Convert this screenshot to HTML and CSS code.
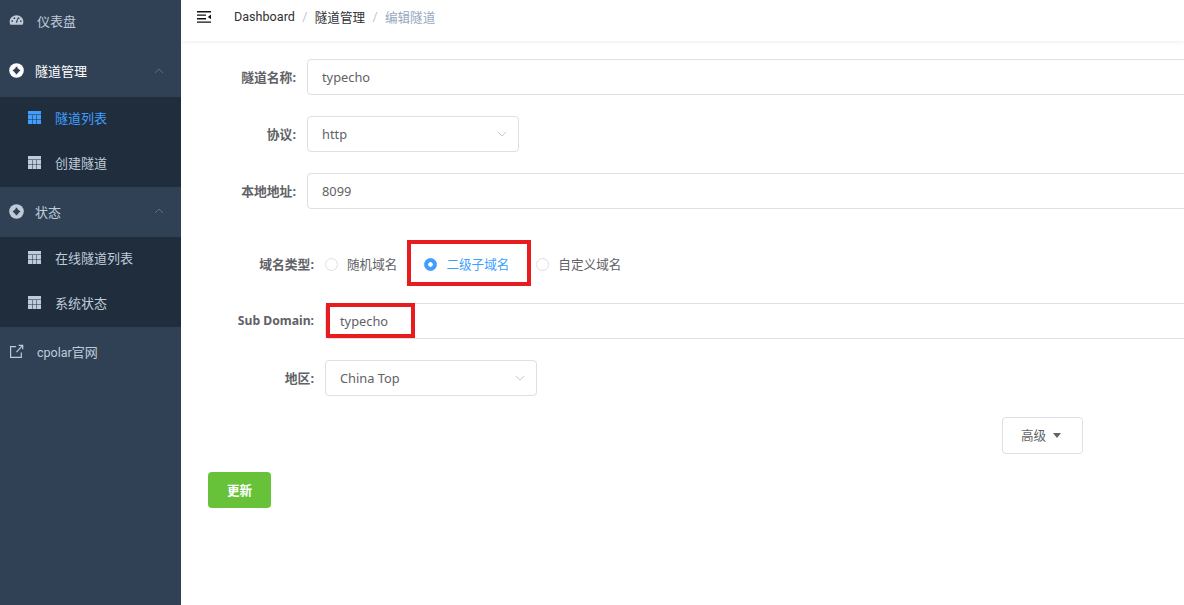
FILE: index.html
```html
<!DOCTYPE html>
<html lang="zh-CN">
<head>
<meta charset="utf-8">
<title>编辑隧道</title>
<link rel="stylesheet" href="styles.css">
</head>
<body>
<aside class="sidebar">
  <a class="menu-item first">
    <svg class="icon" viewBox="0 0 14 14"><path fill="#bfcbd9" d="M7 2C3.200 2 .6 4.900.6 8.200c0 1 .2 2 .7 2.800h11.400c.5-.8.700-1.800.700-2.800C13.400 4.900 10.800 2 7 2z"/><g fill="#304156"><circle cx="3" cy="7.500" r=".8"/><circle cx="5" cy="4.800" r=".8"/><circle cx="9" cy="4.800" r=".8"/><circle cx="11" cy="7.500" r=".8"/><path d="M7.700 4.800l.9.300-1 4h-1.300z"/></g></svg>
    <span>仪表盘</span>
  </a>
  <div class="menu-item open">
    <svg class="icon" viewBox="0 0 14 14"><circle cx="7" cy="7" r="6.800" fill="#fff"/><circle cx="7" cy="7" r="2.400" fill="#304156"/><path fill="#304156" d="M6.200 3.600h1.600v6.800H6.200zM3.600 6.200h6.800v1.600H3.600z"/></svg>
    <span class="title">隧道管理</span>
    <svg class="chevron" viewBox="0 0 10 6"><path d="M1 5l4-4 4 4"/></svg>
  </div>
  <div class="submenu">
    <a class="sub-item active"><svg class="grid" viewBox="0 0 13 13"><path d="M0 0h13v3.400H0zM0 3.900h4v4.100H0zM4.500 3.900h4v4.100h-4zM9 3.900h4v4.100H9zM0 8.500h4V13H0zM4.500 8.500h4V13h-4zM9 8.500h4V13H9z"/></svg><span>隧道列表</span></a>
    <a class="sub-item"><svg class="grid" viewBox="0 0 13 13"><path d="M0 0h13v3.400H0zM0 3.900h4v4.100H0zM4.500 3.900h4v4.100h-4zM9 3.900h4v4.100H9zM0 8.500h4V13H0zM4.500 8.500h4V13h-4zM9 8.500h4V13H9z"/></svg><span>创建隧道</span></a>
  </div>
  <div class="menu-item group">
    <svg class="icon" viewBox="0 0 14 14"><circle cx="7" cy="7" r="6.800" fill="#bfcbd9"/><circle cx="7" cy="7" r="2.400" fill="#304156"/><path fill="#304156" d="M6.200 3.600h1.600v6.800H6.200zM3.600 6.200h6.800v1.600H3.600z"/></svg>
    <span>状态</span>
    <svg class="chevron" viewBox="0 0 10 6"><path d="M1 5l4-4 4 4"/></svg>
  </div>
  <div class="submenu">
    <a class="sub-item"><svg class="grid" viewBox="0 0 13 13"><path d="M0 0h13v3.400H0zM0 3.900h4v4.100H0zM4.500 3.900h4v4.100h-4zM9 3.900h4v4.100H9zM0 8.500h4V13H0zM4.500 8.500h4V13h-4zM9 8.500h4V13H9z"/></svg><span>在线隧道列表</span></a>
    <a class="sub-item"><svg class="grid" viewBox="0 0 13 13"><path d="M0 0h13v3.400H0zM0 3.900h4v4.100H0zM4.500 3.900h4v4.100h-4zM9 3.900h4v4.100H9zM0 8.500h4V13H0zM4.500 8.500h4V13h-4zM9 8.500h4V13H9z"/></svg><span>系统状态</span></a>
  </div>
  <a class="menu-item">
    <svg class="icon" viewBox="0 0 14 14"><path class="line" d="M6.500 2.500H1.500v10h10V8M7 7.500L12.500 1.500M9 1.200h3.800V5"/></svg>
    <span><span class="latin">cpolar</span>官网</span>
  </a>
</aside>

<main class="main">
  <header class="topbar">
    <svg class="hamburger" viewBox="0 0 14 12"><path d="M0 0h14v1.400H0zM0 3.400h9v1.400H0zM0 7h9v1.400H0zM0 10.400h14v1.400H0zM14 3.600v4.600L10.800 5.900z"/></svg>
    <nav class="crumbs">
      <span class="crumb">Dashboard</span><span class="sep">/</span>
      <span class="crumb">隧道管理</span><span class="sep">/</span>
      <span class="crumb current">编辑隧道</span>
    </nav>
  </header>

  <form class="form">
    <div class="row narrow"><label>隧道名称:</label><div class="field full">typecho</div></div>
    <div class="row narrow"><label>协议:</label><div class="field select">http<svg class="caret" viewBox="0 0 12 7"><path d="M1 1l5 5 5-5"/></svg></div></div>
    <div class="row narrow"><label>本地地址:</label><div class="field full">8099</div></div>

    <div class="row wide radios">
      <label>域名类型:</label>
      <span class="radio"><i class="dot"></i>随机域名</span>
      <span class="radio checked"><i class="dot"></i>二级子域名</span>
      <span class="radio"><i class="dot"></i>自定义域名</span>
      <span class="mark mark-radio"></span>
    </div>
    <div class="row wide sub">
      <label>Sub Domain:</label><div class="field full">typecho</div>
      <span class="mark mark-sub"></span>
    </div>
    <div class="row wide"><label>地区:</label><div class="field select">China Top<svg class="caret" viewBox="0 0 12 7"><path d="M1 1l5 5 5-5"/></svg></div></div>

    <div class="advanced"><button type="button" class="btn-adv">高级<i class="tri"></i></button></div>
    <button type="button" class="btn-submit">更新</button>
  </form>
</main>
</body>
</html>
```
FILE: styles.css
```css
* { box-sizing: border-box; }
html, body { height: 100%; }
body {
  margin: 0;
  display: flex;
  overflow: hidden;
  background: #fff;
  font-family: "Noto Sans", "Noto Sans CJK SC", sans-serif;
  font-size: 13px;
  color: #606266;
}

/* sidebar */
.sidebar {
  flex: 0 0 181px;
  height: 605px;
  background: #304156;
  color: #bfcbd9;
  overflow: hidden;
}
.menu-item {
  display: flex;
  align-items: center;
  height: 50px;
  padding-left: 9px;
  padding-bottom: 2px;
}
.menu-item.first { height: 47px; padding-bottom: 6px; }
.menu-item.open { padding-bottom: 3px; }
.menu-item .icon { width: 15px; height: 15px; margin-right: 13px; flex: none; }
.menu-item.open .icon, .menu-item.group .icon { margin-right: 11px; }
.line { fill: none; stroke: #bfcbd9; stroke-width: 1.100; }
.latin { font-family: Roboto, "Noto Sans", sans-serif; font-size: 12.500px; }
.title { color: #fff; }
.chevron { width: 10px; height: 6px; margin-left: auto; margin-right: 17px; fill: none; stroke: #5f6c7c; stroke-width: 1; }
.submenu { background: #1f2d3d; }
.sub-item {
  display: flex;
  align-items: center;
  height: 45px;
  padding-left: 28px;
  padding-bottom: 4px;
}
.grid { width: 13px; height: 13px; margin-right: 14px; fill: #bfcbd9; flex: none; }
.sub-item.active { color: #409eff; }
.sub-item.active .grid { fill: #409eff; }

/* main */
.main { flex: 1; min-width: 0; overflow: hidden; }
.topbar {
  display: flex;
  align-items: center;
  height: 41px;
  padding: 0 0 7px 16px;
  box-shadow: 0 1px 4px rgba(0, 21, 41, .08);
}
.hamburger { width: 14px; height: 12px; fill: #111; margin-right: 23px; }
.crumbs {
  display: flex;
  align-items: center;
  padding-bottom: 1px;
  font-family: Roboto, "Noto Sans CJK SC", sans-serif;
  font-size: 12.600px;
}
.crumb { color: #303133; }
.crumb.current { color: #97a8be; }
.sep { margin: 0 7.300px; color: #c0c4cc; }

.form { padding: 18px 0 0 27px; }
.row { display: flex; align-items: center; height: 36px; margin-bottom: 21px; }
.row label { font-size: 12.800px; font-weight: 700; color: #606266; text-align: right; flex: none; padding-bottom: 2px; }
.narrow label { width: 88px; margin-right: 11px; }
.wide label { width: 106px; margin-right: 11px; }
.row.sub label { font-size: 12.200px; }
.field {
  display: flex;
  align-items: center;
  height: 36px;
  padding: 0 14px;
  border: 1px solid #dcdfe6;
  border-radius: 4px;
  background: #fff;
  font-size: 12.800px;
}
.field.full { flex: 0 0 1000px; }
.field.select { width: 212px; justify-content: space-between; }
.caret { width: 10px; height: 6px; margin-right: -3px; fill: none; stroke: #b8bcc5; stroke-width: 1; }

.radios { position: relative; margin-top: 37px; }
.radio { display: flex; align-items: center; white-space: nowrap; font-size: 12.600px; margin-right: 27px; padding-bottom: 2px; }
.radio .dot {
  width: 13px; height: 13px; margin-right: 9px; margin-top: 2px;
  border: 1px solid #dcdfe6; border-radius: 50%;
  background: #fff;
}
.radio.checked { color: #409eff; }
.radio.checked .dot { border-color: #409eff; background: radial-gradient(circle, #fff 0 2px, #409eff 2.500px); }
.sub { position: relative; }
.mark { position: absolute; border: 4px solid #e81b1f; pointer-events: none; }
.mark-radio { left: 199px; top: -6px; width: 124px; height: 46px; }
.mark-sub { left: 118px; top: 0; width: 89px; height: 35px; }

.advanced { display: flex; margin-bottom: 18px; padding-left: 794px; }
.btn-adv {
  display: flex; align-items: center;
  width: 81px; height: 37px; padding: 0 0 2px 18px;
  border: 1px solid #dcdfe6; border-radius: 4px;
  background: #fff; color: #606266;
  font: inherit; font-size: 12.600px;
}
.tri { margin-left: 7px; margin-top: 2px; border: 4px solid transparent; border-top: 5px solid #606266; border-bottom: 0; }
.btn-submit {
  display: block;
  width: 63px; height: 36px; padding: 0 0 2px;
  border: 0; border-radius: 4px;
  background: #67c23a; color: #fff;
  font: inherit; font-weight: 700; font-size: 12.600px;
}
```
